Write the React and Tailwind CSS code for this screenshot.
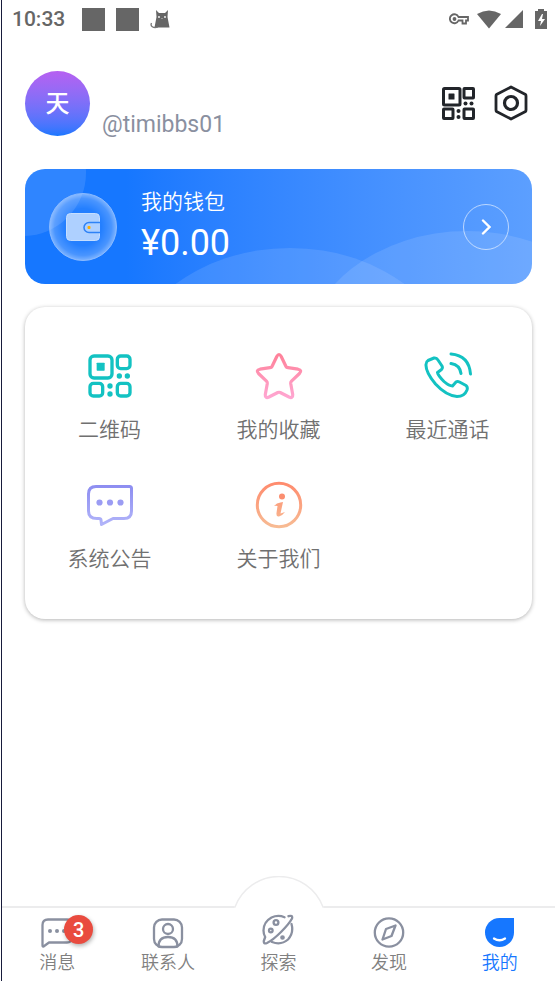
import React from "react";

const TEXT = "font-['Roboto','Noto_Sans_CJK_SC',sans-serif]";

function QrIcon({ className, stroke, width = 5, round = 3 }) {
  return (
    <svg viewBox="0 0 66 66" fill="none" stroke={stroke} strokeWidth={width} strokeLinejoin="round" className={className} aria-hidden="true">
      <rect x="3" y="3" width="33" height="33" rx={round + 1} />
      <rect x="44" y="3" width="19" height="19" rx={round} />
      <rect x="3" y="44" width="19" height="19" rx={round} />
      <rect x="44" y="44" width="19" height="19" rx={round} />
      <g fill={stroke} stroke="none">
        <rect x="13" y="13" width="12" height="12" rx="1" />
        <circle cx="47" cy="33" r="4" />
        <circle cx="59" cy="33" r="4" />
        <circle cx="33" cy="48" r="4" />
        <circle cx="33" cy="60" r="4" />
      </g>
    </svg>
  );
}

function StatusBar() {
  return (
    <div className="flex h-[38px] items-center justify-between pr-2 pl-[10px] text-[#666]">
      <div className="flex items-center">
        <span className="w-[70px] text-[21px] font-medium leading-6">10:33</span>
        <span className="size-[23px] bg-[#666]" />
        <span className="ml-[11px] size-[23px] bg-[#666]" />
        <svg viewBox="0 0 20 20" className="ml-[11px] size-5" fill="#666" aria-hidden="true">
          <path d="M4.500 18.500 6.500 8 6 1 9 4H15L18 1 17.500 8 19.500 18.500Z" />
          <path d="M8 18C3 19.500 0 17 1.500 14" stroke="#777" strokeWidth="1.300" fill="none" />
          <circle cx="9" cy="8" r="0.900" fill="#fff" />
          <circle cx="15" cy="8" r="0.900" fill="#fff" />
          <path d="M11.500 9.500h1" stroke="#ddd" strokeWidth="0.800" />
        </svg>
      </div>
      <div className="flex items-center">
        <svg viewBox="0 0 20 12" className="h-3 w-5" fill="none" stroke="#666" strokeWidth="1.800" aria-hidden="true">
          <path d="M9.500 4H19V7.500H17V10.500H13.500V7.500H9.500A4.500 4.500 0 1 1 9.500 4Z" />
          <circle cx="5.500" cy="6" r="1" />
        </svg>
        <svg viewBox="0 0 24 19" className="ml-2 h-[19px] w-6" fill="#666" aria-hidden="true">
          <path d="M0 4Q12-3 24 4L12 18.500Z" />
        </svg>
        <svg viewBox="0 0 18 18" className="ml-1 size-[18px]" fill="#666" aria-hidden="true">
          <path d="M18 0V18H0Z" />
        </svg>
        <svg viewBox="0 0 12 20" className="ml-3 h-5 w-3" fill="#666" aria-hidden="true">
          <path d="M3 0h6v2h3v18H0V2h3Z" />
          <path d="M7 5 3 12h3l-1 5 5-7H7l1-5Z" fill="#fff" />
        </svg>
      </div>
    </div>
  );
}

function Profile() {
  return (
    <header className="mx-[23px] mt-[33px] flex h-[66px] items-start">
      <div className="flex size-[65px] items-center justify-center rounded-full bg-linear-to-b from-[#b660f1] to-[#1677ff] text-2xl font-medium text-white">天</div>
      <span className="mt-10 ml-3 text-[23px] leading-7 text-[#8a90a0]">@timibbs01</span>
      <button type="button" aria-label="二维码" className="mt-4 ml-auto">
        <QrIcon stroke="#22252a" width={6} round={1} className="size-[33px]" />
      </button>
      <button type="button" aria-label="设置" className="mt-3.5 mr-1 ml-[19px]">
        <svg viewBox="0 0 34 36" className="h-9 w-[34px]" fill="none" stroke="#22252a" strokeWidth="2.800" strokeLinejoin="round" aria-hidden="true">
          <path d="M17 2 31.500 9.500Q32 10 32 11V25Q32 26 31.500 26.500L17 34 2.500 26.500Q2 26 2 25V11Q2 10 2.500 9.500Z" />
          <circle cx="17" cy="18" r="6.500" strokeWidth="3.200" />
        </svg>
      </button>
    </header>
  );
}

function Wallet() {
  return (
    <section className="relative mx-[23px] mt-8 h-[115px] overflow-hidden rounded-[20px] bg-linear-to-r from-[#1677ff] from-20% to-[#5c9fff] text-white">
      <svg viewBox="0 0 507 115" preserveAspectRatio="none" className="absolute inset-0 size-full" fill="#fff" fillOpacity="0.110" aria-hidden="true">
        <circle cx="-2" cy="4" r="63" />
        <ellipse cx="265" cy="215" rx="169" ry="136" />
        <ellipse cx="442" cy="192" rx="164" ry="130" />
      </svg>
      <div className="relative flex h-full items-center pr-[23px] pl-6">
        <svg viewBox="0 0 68 68" className="size-[68px]" aria-hidden="true">
          <defs>
            <radialGradient id="walletGlow">
              <stop offset="0.550" stopColor="#fff" stopOpacity="0.060" />
              <stop offset="0.850" stopColor="#fff" stopOpacity="0.220" />
              <stop offset="1" stopColor="#fff" stopOpacity="0.450" />
            </radialGradient>
          </defs>
          <circle cx="34" cy="34" r="33.500" fill="url(#walletGlow)" stroke="#8abaff" strokeWidth="1" />
          <rect x="17.500" y="20.500" width="33" height="27" rx="4" fill="#aed0ff" stroke="#c5deff" />
          <path d="M51 29.500H40a5 5 0 0 0 0 10H51" fill="#aed0ff" stroke="#2e82f6" strokeWidth="1.500" />
          <rect x="38.500" y="33" width="3" height="3" rx="1" fill="#ffb000" />
        </svg>
        <div className="ml-6">
          <h2 className="text-[21px] font-[350] leading-7">我的钱包</h2>
          <p className="mt-1 text-4xl leading-[46px]">¥0.00</p>
        </div>
        <button type="button" aria-label="打开钱包" className="ml-auto flex size-[46px] items-center justify-center rounded-full border border-white/60">
          <svg viewBox="0 0 10 16" className="h-4 w-2.5" fill="none" stroke="#fff" strokeWidth="2.400" strokeLinecap="round" aria-hidden="true">
            <path d="m2 1.500 6.500 6.500L2 14.500" />
          </svg>
        </button>
      </div>
    </section>
  );
}

function Gradient({ id, from, to }) {
  return (
    <defs>
      <linearGradient id={id} x1="0" y1="0" x2="0" y2="48" gradientUnits="userSpaceOnUse">
        <stop stopColor={from} />
        <stop offset="1" stopColor={to} />
      </linearGradient>
    </defs>
  );
}

const services = [
  {
    label: "二维码",
    icon: (
      <span className="flex size-12 items-center justify-center">
        <QrIcon stroke="#13c2c2" width={5} round={5} className="size-11" />
      </span>
    ),
  },
  {
    label: "我的收藏",
    icon: (
      <svg viewBox="0 0 48 48" className="size-12" fill="none" strokeWidth="3.200" strokeLinejoin="round" aria-hidden="true">
        <Gradient id="star" from="#ff7f96" to="#ffa8d4" />
        <path stroke="url(#star)" d="M21.800 4.500Q24 .5 26.200 4.500L31 14.500Q31.500 15.500 33 15.700L43 17.200Q47.500 18.200 44.500 21.500L36.500 29.200Q35.500 30.200 35.700 31.500L37.700 42.500Q38 46.800 34 45L25.200 40.500Q24 40 22.800 40.500L14 45Q10 46.800 10.300 42.500L12.300 31.500Q12.500 30.200 11.500 29.200L3.500 21.500Q.5 18.200 5 17.200L15 15.700Q16.500 15.500 17 14.500Z" />
      </svg>
    ),
  },
  {
    label: "最近通话",
    icon: (
      <svg viewBox="0 0 48 48" className="size-12" fill="none" stroke="#13c2c2" strokeWidth="3" strokeLinecap="round" strokeLinejoin="round" aria-hidden="true">
        <path d="M4 8.500 10 6Q12.500 5.500 14 8L18 14Q19 16 17.500 17.500L13.500 20.500Q14 23.500 20 29.500 25 34 28.500 34L32 30Q33.500 29 35.500 30L42 33.500Q44 35 43 38 40.500 44.500 33 44.500 22 43.500 11.500 32 1.500 20 2 12.500 2.200 9.500 4 8.500Z" />
        <path d="M27 2Q45 3.500 46.500 22M27 11.500Q36 13 37 21.500" />
      </svg>
    ),
  },
  {
    label: "系统公告",
    icon: (
      <svg viewBox="0 0 48 48" className="size-12" fill="none" strokeWidth="3" strokeLinejoin="round" aria-hidden="true">
        <Gradient id="notice" from="#8989f0" to="#b5b8fa" />
        <path stroke="url(#notice)" d="M10 5.500H43.500Q45.500 5.500 45.500 7.500V30Q45.500 37.500 38 37.500H27L15.500 43.500 15 39Q14.800 37.500 13 37.500H11Q2.500 37.500 2.500 30V13Q2.500 5.500 10 5.500Z" />
        <g fill="#9b9cf3">
          <circle cx="13.500" cy="21.500" r="3.100" />
          <circle cx="24" cy="21.500" r="3.100" />
          <circle cx="34.500" cy="21.500" r="3.100" />
        </g>
      </svg>
    ),
  },
  {
    label: "关于我们",
    icon: (
      <svg viewBox="0 0 48 48" className="size-12" fill="none" aria-hidden="true">
        <Gradient id="about" from="#ff896c" to="#f7bd95" />
        <circle cx="24" cy="24" r="21.700" stroke="url(#about)" strokeWidth="3" />
        <circle cx="27" cy="15.500" r="3" fill="#fb8e70" />
        <path fill="url(#about)" d="M28 21Q26 21 22 22.500L19 25Q21 24.500 22.500 25L21.500 32Q21 36 24 35.500 27 35 30 31L25.500 32.500Z" />
      </svg>
    ),
  },
];

function Services() {
  return (
    <section className="mx-[23px] mt-[23px] grid grid-cols-3 gap-y-9 rounded-[20px] bg-white pt-[45px] pb-[45px] shadow-[0_1px_4px_rgba(0,0,0,0.3)]">
      {services.map(({ label, icon }) => (
        <button type="button" key={label} className="flex flex-col items-center gap-[15px] text-[21px] font-[350] leading-[30px] text-[#707070]">
          {icon}
          <span>{label}</span>
        </button>
      ))}
    </section>
  );
}

const tabs = [
  {
    label: "消息",
    badge: 3,
    icon: (
      <>
        <path d="M7 2.500H26Q30.500 2.500 30.500 7V21Q30.500 25.500 26 25.500H8L2.500 29.500Q1.500 30 1.500 28V8Q1.500 2.500 7 2.500Z" />
        <g fill="#8a90a0" stroke="none">
          <circle cx="9" cy="14" r="2" />
          <circle cx="16" cy="14" r="2" />
          <circle cx="23" cy="14" r="2" />
        </g>
      </>
    ),
  },
  {
    label: "联系人",
    icon: (
      <>
        <rect x="2" y="2.500" width="28" height="27.500" rx="8" />
        <circle cx="16" cy="12" r="5" />
        <path d="M6.500 29.500Q6.500 20 16 20T25.500 29.500" />
      </>
    ),
  },
  {
    label: "探索",
    raised: true,
    icon: (
      <>
        <path d="M22.500 3.200Q16 .5 9.500 3.500 1.500 8 1.500 16.500 1.500 20 3.200 23L1.800 27Q1.500 30.500 5 29 11 26 19 18T30 4.500Q31 .8 26.500 2.200M29.500 10Q32 19 26 25.500 19 31.500 10 28" />
        <circle cx="14" cy="8.500" r="2.400" />
        <circle cx="8.800" cy="16.500" r="1.800" />
        <circle cx="20.500" cy="23.500" r="1.200" />
      </>
    ),
  },
  {
    label: "发现",
    icon: (
      <>
        <circle cx="16" cy="15.500" r="14.200" />
        <path d="M22.500 8.500 18.500 19 9.500 22.500 13 12Z" />
      </>
    ),
  },
  {
    label: "我的",
    active: true,
    icon: (
      <>
        <path d="M15.500 1H30V15.500A14.500 14.500 0 1 1 15.500 1Z" fill="#1677ff" stroke="none" />
        <path d="M10 21.500Q15.500 25 21 21.500" stroke="#fff" strokeLinecap="round" />
      </>
    ),
  },
];

function TabBar() {
  return (
    <nav className="mt-auto">
      <div className="flex h-8 items-end">
        <div className="h-0.5 flex-1 bg-[#ececed]" />
        <svg viewBox="0 0 90 32" className="h-8 w-[90px]" fill="none" stroke="#ececed" strokeWidth="1.500" aria-hidden="true">
          <path d="M0 31H1A47 47 0 0 1 89 31H90" />
        </svg>
        <div className="h-0.5 flex-1 bg-[#ececed]" />
      </div>
      <div className="grid h-[73px] grid-cols-5">
        {tabs.map(({ label, icon, badge, active, raised }) => (
          <button
            type="button"
            key={label}
            aria-current={active ? "page" : undefined}
            className={`flex flex-col items-center text-lg font-[350] leading-7 ${active ? "text-[#1677ff]" : "text-[#808080]"}`}
          >
            <span className={`relative flex h-[41px] ${raised ? "items-start pt-1.5" : "items-end"}`}>
              <svg viewBox="0 0 32 32" className="size-8" fill="none" stroke="#8a90a0" strokeWidth="2.300" strokeLinecap="round" strokeLinejoin="round" aria-hidden="true">
                {icon}
              </svg>
              {badge && (
                <span className="absolute top-[7px] left-[23px] flex size-[29px] items-center justify-center rounded-full bg-[#e94b3f] text-xl font-medium text-white shadow-[1px_2px_4px_rgba(0,0,0,0.3)]">{badge}</span>
              )}
            </span>
            <span>{label}</span>
          </button>
        ))}
      </div>
    </nav>
  );
}

export default function App() {
  return (
    <div className={`flex min-h-screen bg-white ${TEXT}`}>
      <div className="ml-px w-px bg-[#171b3b]" />
      <main className="flex min-w-0 flex-1 flex-col">
        <StatusBar />
        <Profile />
        <Wallet />
        <Services />
        <TabBar />
      </main>
    </div>
  );
}
